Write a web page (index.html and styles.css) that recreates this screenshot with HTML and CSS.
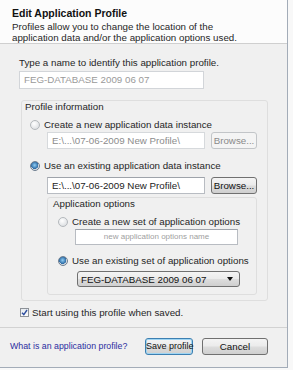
FILE: index.html
```html
<!DOCTYPE html>
<html>
<head>
	<meta charset="utf-8">
	<title>Edit Application Profile</title>
	<link rel="stylesheet" href="styles.css">
</head>
<body>
	<div class="dialog">
		<header class="head">
			<h1>Edit Application Profile</h1>
			<p>Profiles allow you to change the location of the<br>application data and/or the application options used.</p>
		</header>

		<div class="main">
			<div class="prompt">Type a name to identify this application profile.</div>
			<div class="field name-field">FEG-DATABASE 2009 06 07</div>

			<div class="group outer">
				<div class="group-label">Profile information</div>

				<div class="option first">
					<span class="radio"></span>
					<span>Create a new application data instance</span>
				</div>
				<div class="path-row">
					<div class="field path disabled">E:\...\07-06-2009 New Profile\</div>
					<div class="btn browse disabled">Browse...</div>
				</div>

				<div class="option second">
					<span class="radio checked"></span>
					<span>Use an existing application data instance</span>
				</div>
				<div class="path-row row2">
					<div class="field path">E:\...\07-06-2009 New Profile\</div>
					<div class="btn browse">Browse...</div>
				</div>

				<div class="group inner">
					<div class="group-label">Application options</div>
					<div class="option first">
						<span class="radio"></span>
						<span>Create a new set of application options</span>
					</div>
					<div class="field options-name">new application options name</div>
					<div class="option second">
						<span class="radio checked"></span>
						<span>Use an existing set of application options</span>
					</div>
					<div class="select">
						<span>FEG-DATABASE 2009 06 07</span>
						<span class="arrow"></span>
					</div>
				</div>
			</div>

			<div class="check-row">
				<span class="checkbox">
					<svg width="7" height="7" viewBox="0 0 7 7"><path d="M1 3.8 L2.8 5.6 L6 1" fill="none" stroke="#2f4f9f" stroke-width="1.4"/></svg>
				</span>
				<span>Start using this profile when saved.</span>
			</div>
		</div>

		<footer class="foot">
			<a class="help" href="#">What is an application profile?</a>
			<div class="btn save">Save profile</div>
			<div class="btn cancel">Cancel</div>
		</footer>
	</div>
</body>
</html>
```

FILE: styles.css
```css
* {
	margin: 0;
	padding: 0;
	box-sizing: border-box;
}

body {
	background: #f8f8f8;
	font-family: "Liberation Sans", Arial, sans-serif;
	font-size: 9.75px;
	color: #262626;
	white-space: nowrap;
}

.dialog {
	width: 288px;
	height: 368px;
	background: #f0f0f0;
	border-right: 1px solid #a3acb8;
	border-bottom: 1px solid #a3acb8;
	display: flex;
	flex-direction: column;
}

.head {
	background: #fcfcfc;
	height: 44px;
	padding: 7px 12px 0;
	border-bottom: 1px solid #cfcfcf;
}

.head h1 {
	font-size: 10.5px;
	font-weight: bold;
	line-height: 13px;
	color: #111;
}

.head p {
	line-height: 11px;
	margin-top: 1px;
}

.main {
	flex: 1;
	padding: 0 19px;
}

.prompt {
	margin-top: 12px;
	line-height: 13px;
}

.field {
	background: #fff;
	border: 1px solid #b8bcc2;
	border-top-color: #9ea3aa;
	height: 16px;
	line-height: 14px;
	padding-left: 4px;
	overflow: hidden;
	color: #222;
}

.name-field {
	margin-top: 2px;
	width: 185px;
	height: 18px;
	line-height: 16px;
	color: #9a9a9a;
	border-color: #d2d5d9;
}

.group {
	border: 1px solid #dedede;
	border-radius: 3px;
}

.outer {
	margin: 11px 0 0 2px;
	width: 247px;
	padding-bottom: 5px;
}

.group-label {
	line-height: 12px;
	padding-left: 3px;
}

.option {
	display: flex;
	align-items: center;
	gap: 4px;
	line-height: 13px;
	margin-left: 8px;
}

.outer > .first {
	margin-top: 5px;
}

.outer > .second {
	margin-top: 10px;
}

.radio {
	width: 10px;
	height: 10px;
	border-radius: 50%;
	border: 1px solid #b4b8bc;
	background: radial-gradient(circle at 40% 35%, #ffffff, #dcdfe2 80%);
}

.radio.checked {
	border-color: #6d7d8f;
	background: radial-gradient(circle at 45% 40%, #8fcdf4 0, #2c6aa4 55%, #d8dde2 60%);
}

.path-row {
	display: flex;
	gap: 6px;
	margin: 1px 0 0 25px;
}

.path-row.row2 {
	margin-top: 5px;
}

.path {
	width: 158px;
	height: 17px;
	line-height: 15px;
}

.path.disabled {
	color: #8c8c8c;
	border-color: #d6d9dc;
}

.btn {
	height: 17px;
	line-height: 15px;
	text-align: center;
	border: 1px solid #707070;
	border-radius: 3px;
	background: linear-gradient(#f4f4f4, #ebebeb 48%, #dddddd 52%, #cfcfcf);
	color: #111;
}

.browse {
	width: 46px;
}

.btn.disabled {
	border-color: #c2c5c8;
	background: #f4f4f4;
	color: #8a8a8a;
}

.inner {
	margin: 3px 0 0 25px;
	width: 210px;
	padding-bottom: 7px;
}

.inner .group-label {
	padding-left: 5px;
}

.inner .option {
	margin-left: 10px;
}

.inner .first {
	margin-top: 5px;
}

.inner .second {
	margin-top: 9px;
}

.options-name {
	margin: 1px 0 0 27px;
	width: 163px;
	text-align: center;
	font-size: 8px;
	color: #a0a0a0;
	padding-left: 0;
}

.select {
	margin: 4px 0 0 29px;
	width: 163px;
	height: 16px;
	border: 1px solid #707070;
	border-radius: 3px;
	background: linear-gradient(#f4f4f4, #ebebeb 48%, #dddddd 52%, #cfcfcf);
	display: flex;
	align-items: center;
	justify-content: space-between;
	padding: 0 6px 0 3px;
	color: #111;
}

.arrow {
	border-left: 3px solid transparent;
	border-right: 3px solid transparent;
	border-top: 4px solid #111;
}

.check-row {
	display: flex;
	align-items: center;
	gap: 3px;
	margin: 5px 0 0 1px;
	line-height: 13px;
}

.checkbox {
	width: 9px;
	height: 9px;
	border: 1px solid #8d9298;
	background: linear-gradient(#e8ecf0, #fbfbfb);
	display: flex;
	align-items: center;
	justify-content: center;
}

.foot {
	height: 40px;
	border-top: 1px solid #d2d2d2;
	display: flex;
	align-items: center;
	padding: 0 19px 3px 10px;
}

.help {
	font-size: 8.8px;
	color: #2b2ea0;
	text-decoration: none;
	margin-right: auto;
}

.save {
	width: 48px;
	font-size: 9px;
	border-color: #3c7fb1;
	box-shadow: inset 0 0 0 1px #9fd5f3;
}

.cancel {
	width: 66px;
	margin-left: 9px;
}
```
